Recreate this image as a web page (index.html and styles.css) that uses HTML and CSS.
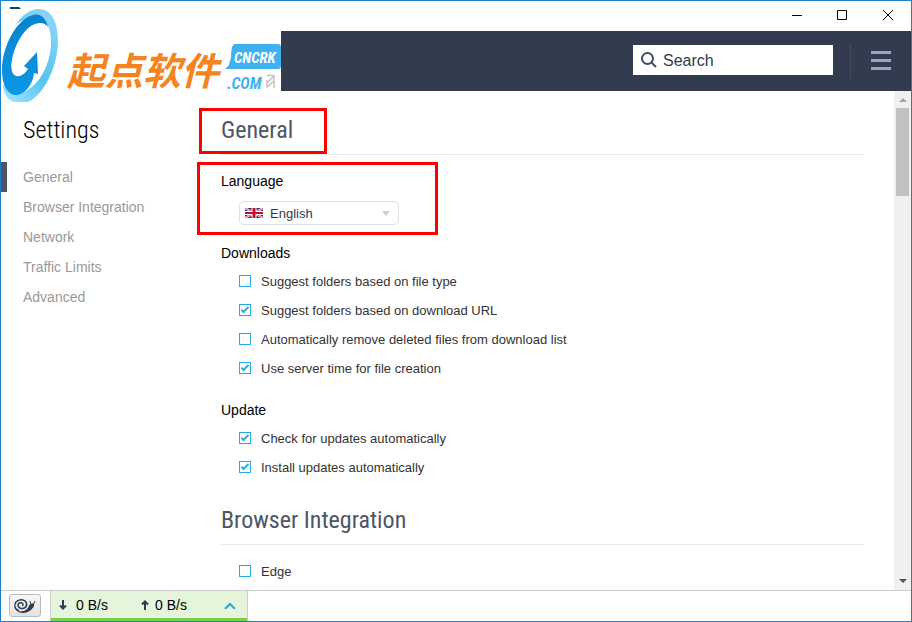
FILE: index.html
```html
<!DOCTYPE html>
<html lang="en">
<head>
<meta charset="utf-8">
<title>Settings</title>
<link rel="stylesheet" href="styles.css">
</head>
<body>
<div class="window">
  <header class="titlebar">
    <button class="win-btn" aria-label="Minimize"><svg width="10" height="10"><path d="M1 4.500H11" /></svg></button>
    <button class="win-btn" aria-label="Maximize"><svg width="10" height="10"><path d="M.5 -.5H9.500V8.500H.5Z" /></svg></button>
    <button class="win-btn" aria-label="Close"><svg width="10" height="10"><path d="M0 -1L10 9M10 -1L0 9" /></svg></button>
  </header>

  <div class="toolbar">
    <label class="search">
      <svg width="16" height="16" viewBox="0 0 16 16"><circle cx="6.500" cy="6.500" r="5.500" /><path d="M10.500 10.500L15 15" /></svg>
      <input type="text" placeholder="Search" aria-label="Search">
    </label>
    <span class="divider"></span>
    <button class="menu" aria-label="Menu"><span></span><span></span><span></span></button>
  </div>

  <div class="brand">
    <svg width="281" height="102" viewBox="0 0 281 102" role="img" aria-label="Logo">
      <defs>
        <linearGradient id="ring" x1="0" y1="1" x2=".6" y2="0"><stop offset="0" stop-color="#a5e6ff"/><stop offset=".5" stop-color="#55c3f2"/><stop offset="1" stop-color="#86d3f7"/></linearGradient>
        <linearGradient id="swirl" x1="0" y1="0" x2="0" y2="1"><stop offset="0" stop-color="#0783cf"/><stop offset="1" stop-color="#0a97e4"/></linearGradient>
      </defs>
      <path fill="#fff" d="M1 31H281V91H60L40 102H1Z"/>
      <path fill="#0d4566" d="M10 7H19L21 9H10Z"/>
      <path fill="url(#ring)" d="M16 24C23 14 31 9 39 9C52 9 58 23 58 41C58 66 44 95 28 102H13C7 99 3 93 3 84L14 94C33 95 51 69 51 42C51 30 48 22 41 20C32 17 24 19 16 24Z"/>
      <path fill="url(#swirl)" d="M48 27C46 18 40 13 33 15C17 19 2 46 2 70C2 85 8 96 17 95C27 93 33 83 34 73L38 74L37 52L24 66L28 69C25 74 20 77 16 76C11 74 10 66 13 55C17 40 26 27 35 24C41 22 45 23 48 27Z"/>
      <text class="brand-cn" x="67" y="85">起点软件</text>
      <path fill="#3fb1ee" d="M235 44H278Q281 44 281 47V66Q281 69 278 69H225L229 65Q229 64 231 58Q231 44 235 44Z"/>
      <text class="brand-tag" x="234" y="63">CNCRK</text>
      <text class="brand-com" x="227" y="89">.COM</text>
      <path fill="none" stroke="#c4c4c4" stroke-width="1.500" d="M267 75.500H274V88M274 76L267 83M267 80V87L274 81"/>
    </svg>
  </div>

  <div class="body">
    <aside class="sidebar">
      <h1>Settings</h1>
      <nav>
        <a class="active" href="#general">General</a>
        <a href="#browser">Browser Integration</a>
        <a href="#network">Network</a>
        <a href="#traffic">Traffic Limits</a>
        <a href="#advanced">Advanced</a>
      </nav>
    </aside>

    <main class="content">
      <h2 class="marked" id="general">General</h2>
      <section class="group language">
        <h3><label for="lang">Language</label></h3>
        <div class="picker">
          <svg class="flag" width="18" height="10" viewBox="0 0 18 10"><path fill="#2b2f78" d="M0 0H18V10H0Z"/><path stroke="#fff" stroke-width="2" d="M0 0L18 10M18 0L0 10"/><path stroke="#d0103a" stroke-width=".7" d="M0 0L18 10M18 0L0 10"/><path stroke="#fff" stroke-width="5" d="M9 0V10"/><path stroke="#fff" stroke-width="4" d="M0 5H18"/><path stroke="#c8102e" stroke-width="3" d="M9 0V10"/><path stroke="#c8102e" stroke-width="2" d="M0 5H18"/></svg>
          <select id="lang"><option>English</option></select>
          <svg class="caret" width="8" height="5"><path d="M0 0H8L4 5Z"/></svg>
        </div>
      </section>

      <section class="group">
        <h3>Downloads</h3>
        <label class="option"><input type="checkbox">Suggest folders based on file type</label>
        <label class="option"><input type="checkbox" checked>Suggest folders based on download URL</label>
        <label class="option"><input type="checkbox">Automatically remove deleted files from download list</label>
        <label class="option"><input type="checkbox" checked>Use server time for file creation</label>
      </section>

      <section class="group">
        <h3>Update</h3>
        <label class="option"><input type="checkbox" checked>Check for updates automatically</label>
        <label class="option"><input type="checkbox" checked>Install updates automatically</label>
      </section>

      <h2 id="browser">Browser Integration</h2>
      <section class="group plain">
        <label class="option"><input type="checkbox">Edge</label>
      </section>
    </main>

    <div class="scrollbar" aria-hidden="true">
      <svg width="8" height="4"><path fill="#a3a3a3" d="M0 4L4 0L8 4Z"/></svg>
      <div class="track"><div class="thumb"></div></div>
      <svg width="8" height="4"><path fill="#505050" d="M0 0H8L4 4Z"/></svg>
    </div>
  </div>

  <footer class="statusbar">
    <button class="snail" aria-label="Snail mode">
      <svg width="24" height="18" viewBox="0 0 24 18"><path class="foot" d="M4 14C8 15 12 14 14 12C16 10 16 7 18 7C20 6 22 7 21 9C19 13 15 16 10 16C7 16 5 15 4 14Z"/><path class="spiral" d="M6 13.500C2 13 .5 8 3 5C6 1.500 12 2 13.500 6C14.500 10 11 12 8 11.500C5 11 4 7 6.500 6C9 5 11 7 9.500 9"/><path class="horn" d="M18 8L17 4M20 8L22 4"/></svg>
    </button>
    <div class="speed">
      <span class="rate"><svg width="8" height="10"><path d="M4 0V8M1 5.500L4 8.500L7 5.500"/></svg>0 B/s</span>
      <span class="rate"><svg width="8" height="10"><path d="M4 10V2M1 4.500L4 1.500L7 4.500"/></svg>0 B/s</span>
      <button class="expand" aria-label="Expand"><svg width="12" height="8"><path d="M1 8L6 3L11 8"/></svg></button>
    </div>
  </footer>
</div>
</body>
</html>
```

FILE: styles.css
```css
*, *::after { box-sizing: border-box; }

body {
  margin: 0;
  font-family: "Liberation Sans", Arial, sans-serif;
  font-size: 14px;
  color: #000;
  background: #fff;
}

button, input, select { font: inherit; margin: 0; padding: 0; border: 0; background: none; }
h1, h2, h3 { margin: 0; font-weight: 400; }

.window {
  position: relative;
  display: flex;
  flex-direction: column;
  height: 100vh;
  border: 1px solid #1b80d0;
}

.titlebar { display: flex; justify-content: flex-end; height: 30px; flex: none; }
.win-btn { width: 46px; display: grid; place-items: center; }
.win-btn svg { fill: none; stroke: #000; overflow: visible; }

.toolbar {
  display: flex;
  align-items: center;
  justify-content: flex-end;
  height: 60px;
  flex: none;
  padding: 0 20px 2px 0;
  background: #333b4e;
}
.search { display: flex; align-items: center; gap: 6px; width: 200px; height: 30px; padding-left: 8px; background: #fff; }
.search svg { flex: none; fill: none; stroke: #424c60; stroke-width: 2; }
.search input { flex: 1; min-width: 0; padding-top: 2px; font-size: 16px; outline: 0; }
.search input::placeholder { color: #333b4e; opacity: 1; }
.divider { width: 1px; height: 34px; margin: 2px 20px 0 17px; background: #414d62; }
.menu { display: grid; gap: 5px; width: 20px; }
.menu span { height: 3px; background: #97a6c6; }

.brand { position: absolute; left: -1px; top: -1px; clip-path: inset(1px 0 0 1px); }
.brand svg { display: block; }
.brand-cn { font: italic 700 38px "Noto Sans CJK SC", sans-serif; fill: #f5841f; }
.brand-tag { font: italic 700 15px "Roboto Condensed", sans-serif; fill: #fff; }
.brand-com { font: italic 700 16px "Roboto Condensed", sans-serif; fill: #3fb1ee; }

.body { display: flex; flex: 1; min-height: 0; }

.sidebar { width: 190px; flex: none; padding-top: 24px; }
h1, h2 { font-family: "Roboto Condensed", "Liberation Sans Narrow", Roboto, sans-serif; font-size: 24px; line-height: 30px; }
h1 { padding-left: 22px; font-weight: 300; }
nav { display: grid; margin-top: 17px; }
nav a { padding-left: 22px; line-height: 30px; color: #999; text-decoration: none; }
nav .active { padding-left: 16px; border-left: 6px solid #4d5666; }

.content { flex: 1; min-width: 0; padding: 24px 30px 0 30px; overflow: hidden; }
h2 { position: relative; padding-bottom: 9px; border-bottom: 1px solid #ebebeb; color: #4d5666; }
.group + h2 { margin-top: 23px; }
h3 { font-size: 14px; line-height: 20px; margin-bottom: 4px; }
.group { position: relative; margin-top: 17px; }
.group.language { margin: 16px 0 18px; }
.group.plain { margin-top: 12px; }

/* Highlight frames over the heading and the language setting */
.marked::after, .language::after { content: ""; position: absolute; border: 3px solid #f00; pointer-events: none; }
.marked::after { left: -22px; top: -7px; width: 128px; height: 46px; }
.language::after { left: -24px; top: -9px; width: 241px; height: 73px; }

.picker { display: flex; align-items: center; gap: 7px; width: 160px; height: 24px; margin: 10px 0 0 18px; padding: 0 8px 0 5px; border: 1px solid #e0e0e0; border-radius: 5px; }
.picker svg { flex: none; }
.picker select { flex: 1; min-width: 0; appearance: none; font-size: 13px; color: #333b4e; }
.caret { fill: #ccc; }

.option { display: flex; align-items: center; gap: 10px; height: 29px; padding-left: 18px; font-size: 13px; color: #333; }
.option input { appearance: none; display: grid; place-items: center; flex: none; width: 12px; height: 12px; margin-bottom: 1px; border: 1px solid #27a9ee; }
.option input:checked::after { content: ""; width: 8px; height: 4px; margin-bottom: 2px; border: solid #27a9ee; border-width: 0 0 2px 2px; transform: rotate(-45deg); }

.scrollbar { display: flex; flex-direction: column; align-items: center; width: 17px; flex: none; padding: 7px 0; background: #f0f0f0; }
.track { flex: 1; width: 13px; padding: 6px 0; }
.thumb { height: 19%; background: #c1c1c1; }

.statusbar { display: flex; height: 31px; flex: none; border-top: 1px solid #ccc; }
.snail { display: grid; place-items: center; width: 32px; height: 23px; margin: 3px 9px 0 8px; border: 1px solid #bbb; border-radius: 3px; background: linear-gradient(#f8f8f8, #e2e2e2); }
.foot { fill: #2f3b50; }
.spiral { fill: none; stroke: #2f3b50; stroke-width: 1.5; }
.horn { fill: none; stroke: #2f3b50; stroke-width: 1; }
.speed { display: flex; align-items: center; width: 198px; padding: 0 11px 2px 8px; border: solid #ccc; border-width: 0 1px; background: #e4f5dc; box-shadow: inset 0 -3px #77d04a; }
.rate { display: flex; align-items: center; gap: 9px; width: 82px; }
.rate + .rate { gap: 6px; }
.rate svg { fill: none; stroke: #2f3b50; stroke-width: 2; }
.expand { margin-left: auto; display: grid; }
.expand svg { fill: none; stroke: #27a9d8; stroke-width: 2; }
```
